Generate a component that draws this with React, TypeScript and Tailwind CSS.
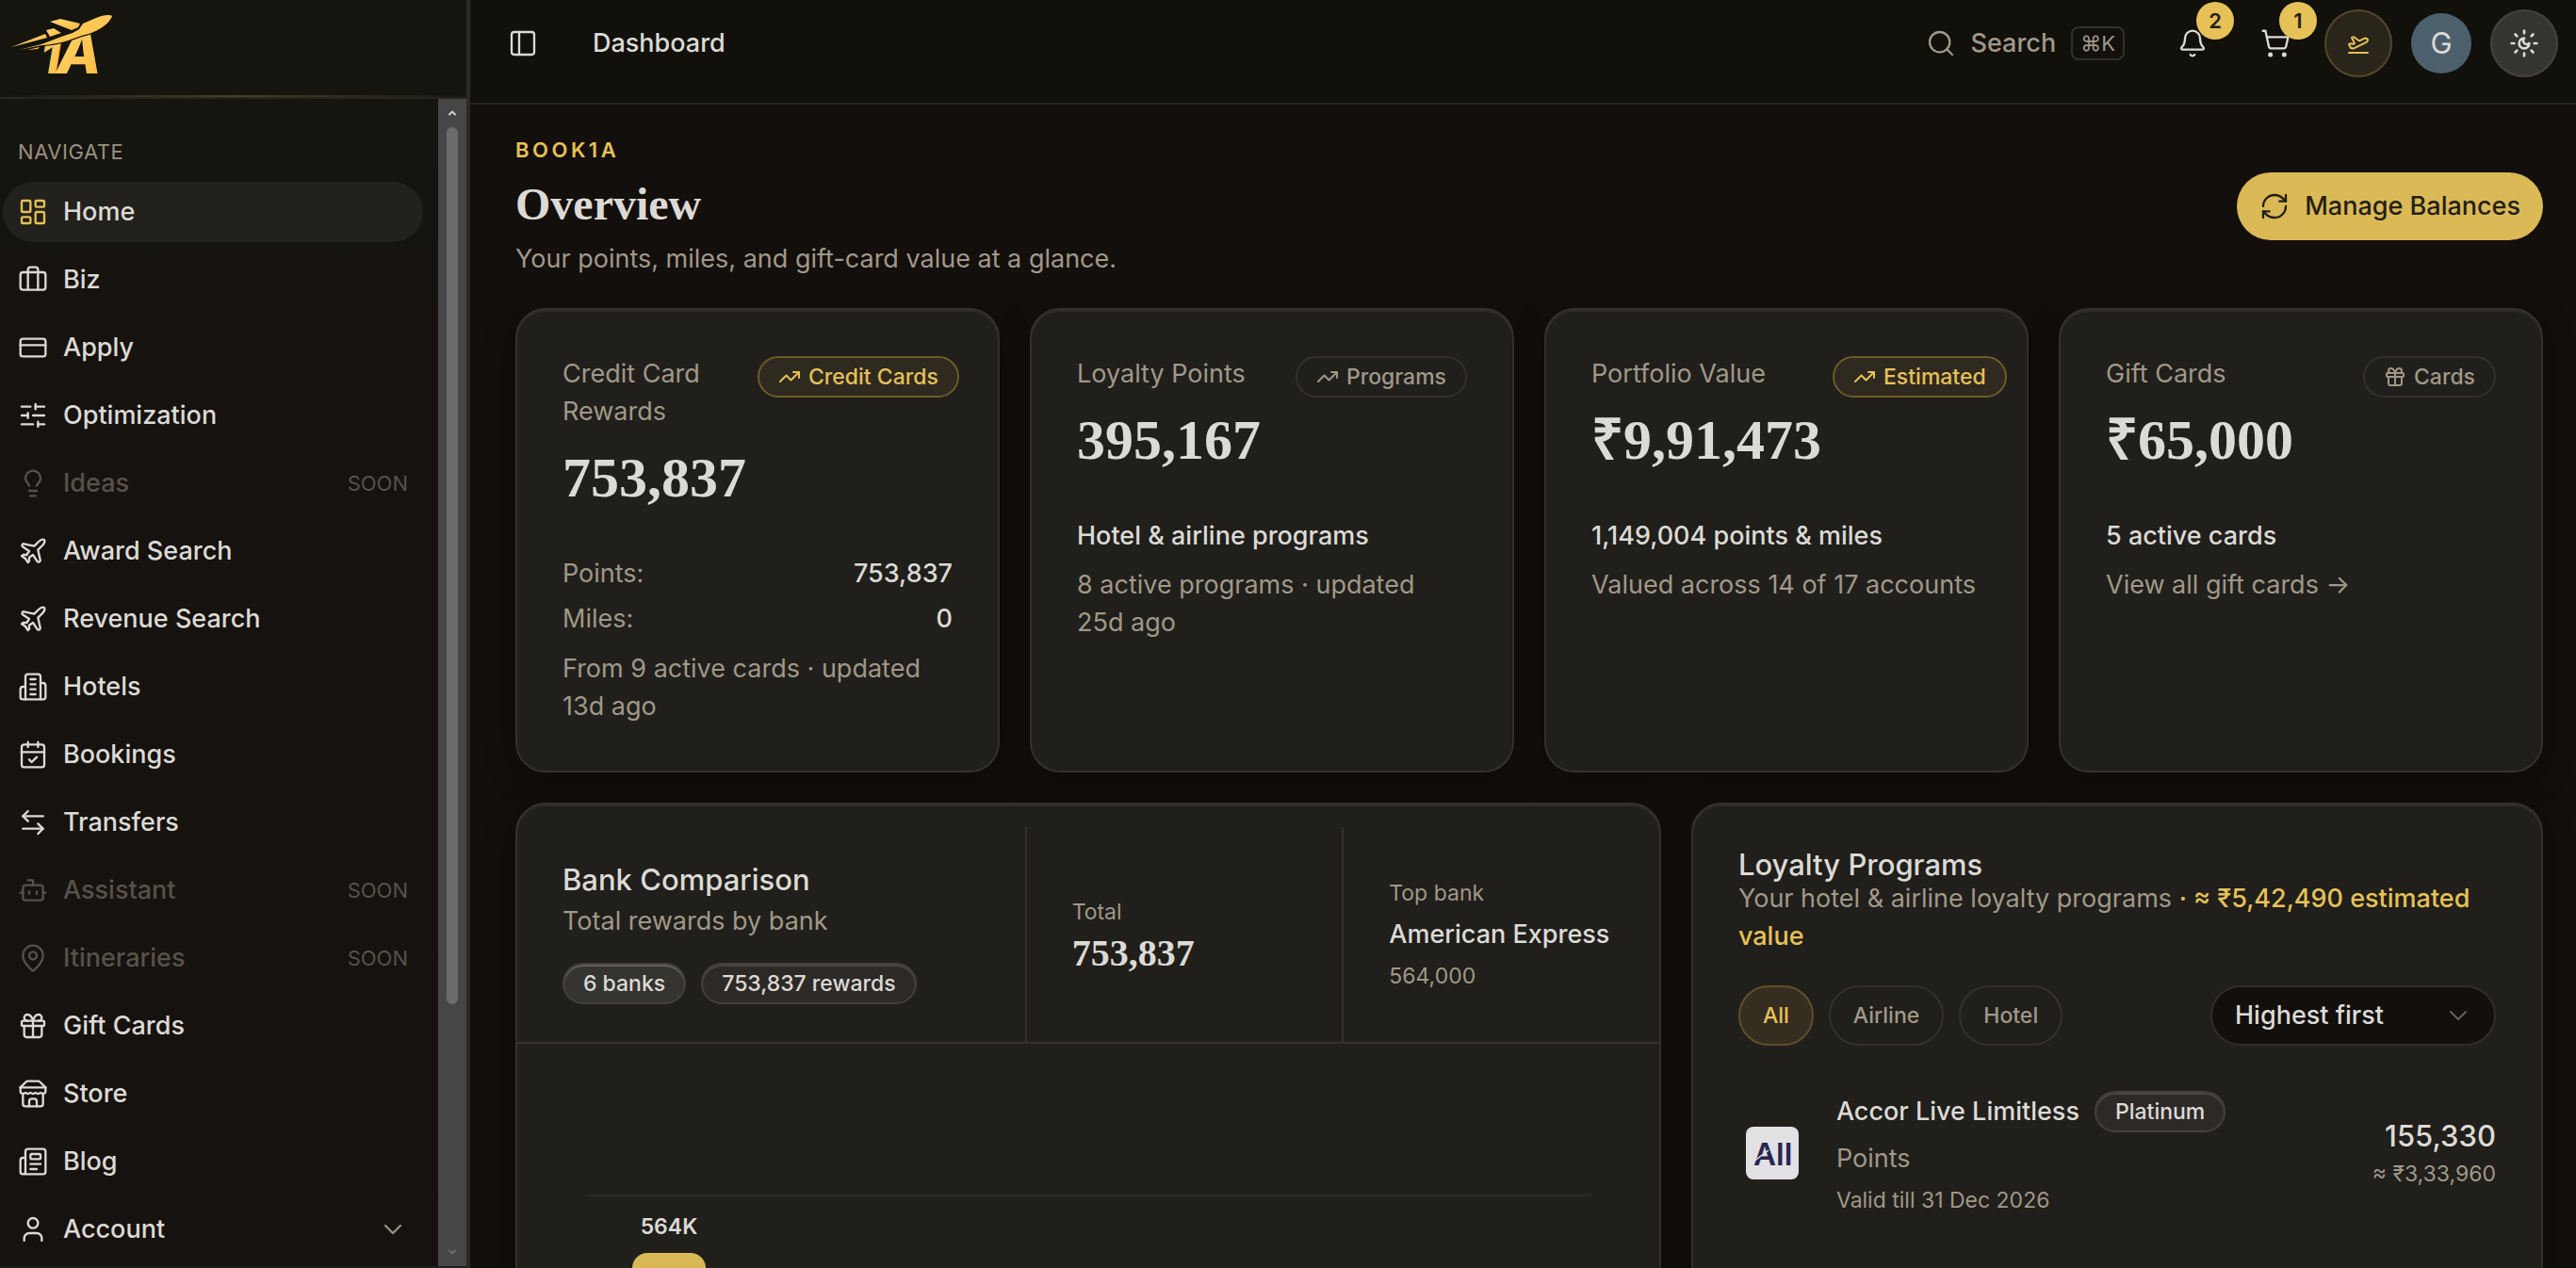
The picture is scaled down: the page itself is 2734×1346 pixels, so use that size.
import React from 'react';
import clsx from 'clsx';
import {
  ArrowLeftRight,
  Bell,
  Bot,
  Briefcase,
  CalendarCheck,
  ChevronDown,
  ChevronUp,
  CreditCard,
  Gift,
  LayoutDashboard,
  Lightbulb,
  MapPin,
  Newspaper,
  PanelLeft,
  Plane,
  PlaneTakeoff,
  RefreshCw,
  Search,
  ShoppingCart,
  SlidersHorizontal,
  TrendingUp,
  User,
} from 'lucide-react';

type IconType = React.ComponentType<{ className?: string; strokeWidth?: number }>;

const HotelIcon: IconType = ({ className, strokeWidth = 2 }) => (
  <svg viewBox="0 0 24 24" fill="none" stroke="currentColor" strokeWidth={strokeWidth} strokeLinecap="round" strokeLinejoin="round" className={className}>
    <path d="M6 22V4a2 2 0 0 1 2-2h8a2 2 0 0 1 2 2v18Z" />
    <path d="M6 12H4a2 2 0 0 0-2 2v6a2 2 0 0 0 2 2h2" />
    <path d="M18 9h2a2 2 0 0 1 2 2v9a2 2 0 0 1-2 2h-2" />
    <path d="M10 6h4M10 10h4M10 14h4M10 18h4" />
  </svg>
);

const StoreIcon: IconType = ({ className, strokeWidth = 2 }) => (
  <svg viewBox="0 0 24 24" fill="none" stroke="currentColor" strokeWidth={strokeWidth} strokeLinecap="round" strokeLinejoin="round" className={className}>
    <path d="m2 7 4.41-4.41A2 2 0 0 1 7.83 2h8.34a2 2 0 0 1 1.42.59L22 7" />
    <path d="M4 12v8a2 2 0 0 0 2 2h12a2 2 0 0 0 2-2v-8" />
    <path d="M15 22v-4a2 2 0 0 0-2-2h-2a2 2 0 0 0-2 2v4" />
    <path d="M2 7h20" />
    <path d="M22 7v3a2 2 0 0 1-2 2a2.7 2.7 0 0 1-1.59-.63.7.7 0 0 0-.82 0A2.7 2.7 0 0 1 16 12a2.7 2.7 0 0 1-1.59-.63.7.7 0 0 0-.82 0A2.7 2.7 0 0 1 12 12a2.7 2.7 0 0 1-1.59-.63.7.7 0 0 0-.82 0A2.7 2.7 0 0 1 8 12a2.7 2.7 0 0 1-1.59-.63.7.7 0 0 0-.82 0A2.7 2.7 0 0 1 4 12a2 2 0 0 1-2-2V7" />
  </svg>
);

// Sun rays around a small moon
const ThemeIcon: IconType = ({ className, strokeWidth = 2 }) => (
  <svg viewBox="0 0 24 24" fill="none" stroke="currentColor" strokeWidth={strokeWidth} strokeLinecap="round" strokeLinejoin="round" className={className}>
    <path d="M12 8a2.83 2.83 0 0 0 4 4 4 4 0 1 1-4-4" />
    <path d="M12 2v2M12 20v2M2 12h2M20 12h2" />
    <path d="m4.9 4.9 1.4 1.4M17.7 17.7l1.4 1.4M6.3 17.7l-1.4 1.4M19.1 4.9l-1.4 1.4" />
  </svg>
);

interface NavItem {
  label: string;
  icon: IconType;
  active?: boolean;
  soon?: boolean;
  expandable?: boolean;
}

const navItems: NavItem[] = [
  { label: 'Home', icon: LayoutDashboard, active: true },
  { label: 'Biz', icon: Briefcase },
  { label: 'Apply', icon: CreditCard },
  { label: 'Optimization', icon: SlidersHorizontal },
  { label: 'Ideas', icon: Lightbulb, soon: true },
  { label: 'Award Search', icon: Plane },
  { label: 'Revenue Search', icon: Plane },
  { label: 'Hotels', icon: HotelIcon },
  { label: 'Bookings', icon: CalendarCheck },
  { label: 'Transfers', icon: ArrowLeftRight },
  { label: 'Assistant', icon: Bot, soon: true },
  { label: 'Itineraries', icon: MapPin, soon: true },
  { label: 'Gift Cards', icon: Gift },
  { label: 'Store', icon: StoreIcon },
  { label: 'Blog', icon: Newspaper },
  { label: 'Account', icon: User, expandable: true },
];

const Logo = () => (
  <svg viewBox="0 0 112 84" className="h-[84px] w-[112px]" role="img" aria-label="1A">
    <defs>
      <linearGradient id="gold" x1="0" y1="0" x2="1" y2="1">
        <stop offset="0" stopColor="#ffd770" />
        <stop offset="1" stopColor="#ffb93f" />
      </linearGradient>
    </defs>
    <g fill="url(#gold)" fontFamily="Inter, sans-serif" fontWeight="800" fontStyle="italic">
      <text x="31" y="64" fontSize="48">1</text>
      <text x="48" y="64" fontSize="62">A</text>
    </g>
    {/* plane with speed trails, outlined in the sidebar colour to cut through the letters */}
    <g fill="url(#gold)" stroke="#15140f" strokeWidth="2.5" paintOrder="stroke" strokeLinejoin="round">
      <path d="M107 3C104 1 97 2 90 5L76 11L72 17L65 21C55 24 40 30 32 33L8 39L33 34C50 33 64 28 74 24C90 21 104 12 107 3Z" />
      <path d="M41 9L52 6L73 11L71 15L64 18Z" />
      <path d="M37 18L45 16L53 21L41 25Z" />
      <path d="M0 36L36 22L38 26Z" />
      <path d="M17 39L30 36L28 38Z" />
    </g>
  </svg>
);

const Sidebar = () => (
  <aside className="flex w-[499px] shrink-0 flex-col border-r-4 border-[#2b2926] bg-[#16120f]">
    <div className="shrink-0 border-b-2 border-[#262520] bg-[#15140f]">
      <div className="flex h-[101px] items-start pl-3 pt-3.5">
        <a href="#home">
          <Logo />
        </a>
      </div>
      <div className="h-0.5 bg-linear-to-r from-transparent via-[#4c3f20] to-transparent" />
    </div>
    <div className="flex min-h-0 flex-1 border-b-2 border-[#211d1a]">
      <nav className="flex min-w-0 flex-1 flex-col gap-2 overflow-hidden bg-linear-to-b from-[#15140f] to-[#16120f] to-30% pl-[3px] pr-4 pt-10">
        <h2 className="px-4 pb-2 text-[22px] leading-[32px] tracking-wide text-[#99917f]">NAVIGATE</h2>
        {navItems.map((item) => (
          <a
            key={item.label}
            href="#nav"
            aria-disabled={item.soon}
            className={clsx(
              'flex h-16 shrink-0 items-center gap-4 rounded-full px-4 text-[27px] font-medium',
              item.soon ? 'text-[#575148]' : 'text-[#dcdad5]',
              item.active && 'bg-[#22211c]'
            )}
          >
            <item.icon className={clsx('size-8 shrink-0', item.active && 'text-[#e6c158]')} strokeWidth={1.75} />
            <span className="flex-1">{item.label}</span>
            {item.soon && <span className="text-[22px] font-normal">SOON</span>}
            {item.expandable && <ChevronDown className="size-8 text-[#99917f]" strokeWidth={1.75} />}
          </a>
        ))}
      </nav>
      <div className="flex w-[30px] flex-col items-center bg-[#464646]">
        <ChevronUp className="h-[30px] w-3 text-[#d0d0d0]" strokeWidth={4} />
        <div className="w-3 flex-[931] rounded-full bg-[#6b6b6b]" />
        <div className="flex-[248]" />
        <ChevronDown className="h-[30px] w-3 text-[#6e6e6e]" strokeWidth={4} />
      </div>
    </div>
  </aside>
);

const CountBadge: React.FC<{ count: number }> = ({ count }) => (
  <span className="absolute -right-3 -top-3 flex size-10 items-center justify-center rounded-full bg-[#e6c158] text-[22px] font-semibold text-[#241f15]">
    {count}
  </span>
);

const TopBar = () => (
  <header className="flex h-[111px] shrink-0 items-center border-b-2 border-[#24221e] bg-[#11100b] pb-[17px] pl-10 pr-[19px]">
    <button type="button" aria-label="Toggle sidebar" className="text-[#dcdad5]">
      <PanelLeft className="size-8" strokeWidth={1.75} />
    </button>
    <span className="ml-[58px] text-[27px] font-medium text-[#dcdad5]">Dashboard</span>
    <button type="button" className="ml-auto mr-10 flex items-center gap-4 text-[27px] font-medium text-[#a19888]">
      <Search className="size-8" strokeWidth={1.75} />
      Search
      <kbd className="flex h-9 items-center rounded-lg border-2 border-[#33302b] px-2 font-[Inter,'DejaVu_Sans',sans-serif] text-[22px] font-normal">⌘K</kbd>
    </button>
    <div className="flex items-center gap-5">
      <div className="flex items-center gap-6 text-[#dcdad5]">
        <button type="button" aria-label="Notifications" className="relative flex size-16 items-center justify-center">
          <Bell className="size-8" strokeWidth={1.75} />
          <CountBadge count={2} />
        </button>
        <button type="button" aria-label="Cart" className="relative flex size-16 items-center justify-center">
          <ShoppingCart className="size-8" strokeWidth={1.75} />
          <CountBadge count={1} />
        </button>
      </div>
      <button type="button" aria-label="Flights" className="flex size-18 items-center justify-center rounded-full border-2 border-[#55462a] bg-[#2a251b] text-[#e6c158]">
        <PlaneTakeoff className="size-6" />
      </button>
      <button type="button" className="flex size-16 items-center justify-center rounded-full bg-[#4b606c] text-[31px] text-[#dcdad5]">G</button>
      <button type="button" aria-label="Theme" className="flex size-18 items-center justify-center rounded-full border-2 border-[#45423e] bg-[#353530] text-[#dcdad5]">
        <ThemeIcon className="size-8" />
      </button>
    </div>
  </header>
);

const cardClass =
  'rounded-[32px] border-2 border-[#35312a] bg-[#201f1b] shadow-[inset_0_2px_0_#2f2c27,0_8px_32px_rgba(0,0,0,0.4)]';

interface StatCardProps {
  title: string;
  value: string;
  badge: string;
  badgeIcon?: IconType;
  highlight?: boolean;
  children: React.ReactNode;
}

const StatCard: React.FC<StatCardProps> = ({ title, value, badge, badgeIcon: BadgeIcon = TrendingUp, highlight, children }) => (
  <section className={clsx(cardClass, 'p-12')}>
    <div className="grid grid-cols-[1fr_auto] items-start gap-x-3">
      <div>
        <h3 className="text-[27px] leading-[40px] text-[#a19888]">{title}</h3>
        <p className="mt-3.5 whitespace-nowrap font-['Liberation_Serif',serif] text-[60px] font-bold leading-[72px]">{value}</p>
      </div>
      <span
        className={clsx(
          'mt-px flex h-11 items-center gap-2 whitespace-nowrap rounded-full border-2 px-5 text-[23px] font-medium',
          highlight ? 'border-[#6f5a28] bg-[#2f2a1f] text-[#e6c158]' : 'border-[#35312a] text-[#a19888]'
        )}
      >
        <BadgeIcon className="size-6" />
        {badge}
      </span>
    </div>
    <div className="mt-[46px] flex flex-col text-[27px] leading-[40px]">{children}</div>
  </section>
);

const Pill: React.FC<{ children: React.ReactNode; light?: boolean }> = ({ children, light }) => (
  <span
    className={clsx(
      'flex h-11 items-center rounded-full border-2 border-[#45403a] px-5 text-[23px] font-medium',
      light ? 'bg-[#353430] shadow-[inset_0_2px_0_#64625e]' : 'bg-[#2d2927] shadow-[inset_0_2px_0_#4b4744]'
    )}
  >
    {children}
  </span>
);

const bars = [{ label: '564K', height: 400 }];

const BankComparison = () => (
  <section className={clsx(cardClass, 'overflow-hidden')}>
    <div className="grid grid-cols-[1.6fr_1fr_1fr] border-b-2 border-[#35312a] pt-6">
      <div className="px-12 pb-10 pt-9">
        <h2 className="text-[31px] font-medium leading-[40px]">Bank Comparison</h2>
        <p className="mt-1 text-[27px] leading-[40px] text-[#a19888]">Total rewards by bank</p>
        <div className="mt-6 flex gap-4">
          <Pill light>6 banks</Pill>
          <Pill>753,837 rewards</Pill>
        </div>
      </div>
      <div className="flex flex-col justify-center gap-2 border-l-2 border-[#35312a] px-12">
        <span className="text-[23px] leading-[32px] text-[#a19888]">Total</span>
        <span className="font-['Liberation_Serif',serif] text-[40px] font-bold leading-[40px]">753,837</span>
      </div>
      <div className="flex flex-col justify-center gap-2 whitespace-nowrap border-l-2 border-[#35312a] pl-12">
        <span className="text-[23px] leading-[32px] text-[#a19888]">Top bank</span>
        <span className="text-[27px] font-medium leading-[40px]">American Express</span>
        <span className="text-[23px] leading-[32px] text-[#a19888]">564,000</span>
      </div>
    </div>
    <div className="px-18 pt-40">
      <div className="grid grid-cols-6 border-t-2 border-[#2a2925] pt-4">
        {bars.map((bar) => (
          <div key={bar.label} className="flex flex-col items-center gap-3">
            <span className="text-[23px] font-semibold leading-[32px]">{bar.label}</span>
            <div className="w-[78px] rounded-t-2xl bg-linear-to-b from-[#dab956] to-[#a98a35]" style={{ height: bar.height }} />
          </div>
        ))}
      </div>
    </div>
  </section>
);

const filters = ['All', 'Airline', 'Hotel'];

const LoyaltyPrograms = () => {
  const [filter, setFilter] = React.useState('All');

  return (
    <section className={clsx(cardClass, 'p-12')}>
      <h2 className="text-[31px] font-medium leading-[32px]">Loyalty Programs</h2>
      <p className="text-[27px] leading-[40px] text-[#a19888]">
        Your hotel &amp; airline loyalty programs <span className="font-medium text-[#e6c158]">· ≈ ₹5,42,490 estimated value</span>
      </p>
      <div className="mt-8 flex items-center gap-4">
        {filters.map((name) => (
          <button
            key={name}
            type="button"
            onClick={() => setFilter(name)}
            className={clsx(
              'h-16 rounded-full border-2 px-6 text-[23px] font-medium',
              filter === name ? 'border-[#5f4f28] bg-[#352e20] text-[#e6c158]' : 'border-[#35312a] text-[#a19888]'
            )}
          >
            {name}
          </button>
        ))}
        <div className="relative ml-auto">
          <select aria-label="Sort programs" className="h-16 w-[303px] appearance-none rounded-full border-2 border-[#312d28] bg-[#130f0c] px-6 text-[27px] font-medium">
            <option>Highest first</option>
          </select>
          <ChevronDown className="pointer-events-none absolute right-6 top-4 size-8 text-[#66625a]" strokeWidth={1.5} />
        </div>
      </div>
      <div className="mt-12 flex items-center">
        <div className="flex w-18 justify-center">
          <svg viewBox="0 0 56 56" className="size-14" role="img" aria-label="All">
            <rect width="56" height="56" rx="8" fill="#e1e1e3" />
            <text x="8" y="41" fontFamily="Inter, sans-serif" fontSize="33" fontWeight="600" fill="#28264f">All</text>
            <path d="M8 37L24 25" stroke="#e1e1e3" strokeWidth="1.5" />
          </svg>
        </div>
        <div className="ml-8 flex flex-col gap-2">
          <div className="flex items-center gap-4">
            <span className="text-[27px] font-medium">Accor Live Limitless</span>
            <Pill>Platinum</Pill>
          </div>
          <span className="text-[27px] leading-[40px] text-[#a19888]">Points</span>
          <span className="text-[23px] leading-[32px] text-[#a19888]">Valid till 31 Dec 2026</span>
        </div>
        <div className="ml-auto flex flex-col gap-1 text-right">
          <span className="text-[31px] font-medium leading-[40px]">155,330</span>
          <span className="text-[23px] leading-[32px] text-[#a19888]">≈ ₹3,33,960</span>
        </div>
      </div>
    </section>
  );
};

export default function App() {
  return (
    <div className="flex h-screen overflow-hidden bg-[#130f0c] font-[Inter,sans-serif] text-[#dcdad5]">
      <Sidebar />
      <div className="flex min-w-0 flex-1 flex-col">
        <TopBar />
        <main className="min-h-0 flex-1 overflow-hidden pl-12 pr-[35px] pt-8">
          <div className="mb-8 flex items-center justify-between">
            <div>
              <p className="text-[22px] font-semibold leading-[32px] tracking-[0.16em] text-[#e6c158]">BOOK1A</p>
              <h1 className="mt-3.5 font-['Liberation_Serif',serif] text-[48px] font-bold leading-[56px]">Overview</h1>
              <p className="mt-2.5 text-[27px] leading-[40px] text-[#a19888]">Your points, miles, and gift-card value at a glance.</p>
            </div>
            <button type="button" className="flex h-18 items-center gap-4 rounded-full bg-[#dab956] px-6 text-[27px] font-medium text-[#241f15]">
              <RefreshCw className="size-8" strokeWidth={1.75} />
              Manage Balances
            </button>
          </div>

          <div className="grid grid-cols-4 gap-8">
            <StatCard title="Credit Card Rewards" value="753,837" badge="Credit Cards" highlight>
              <div className="flex justify-between text-[#a19888]">
                Points: <span className="font-medium text-[#dcdad5]">753,837</span>
              </div>
              <div className="mt-2 flex justify-between text-[#a19888]">
                Miles: <span className="font-medium text-[#dcdad5]">0</span>
              </div>
              <p className="mt-[13px] text-[#a19888]">From 9 active cards · updated 13d ago</p>
            </StatCard>
            <StatCard title="Loyalty Points" value="395,167" badge="Programs">
              <p className="font-medium">Hotel &amp; airline programs</p>
              <p className="mt-3 text-[#a19888]">8 active programs · updated 25d ago</p>
            </StatCard>
            <StatCard title="Portfolio Value" value="₹9,91,473" badge="Estimated" highlight>
              <p className="font-medium">1,149,004 points &amp; miles</p>
              <p className="mt-3 text-[#a19888]">Valued across 14 of 17 accounts</p>
            </StatCard>
            <StatCard title="Gift Cards" value="₹65,000" badge="Cards" badgeIcon={Gift}>
              <p className="font-medium">5 active cards</p>
              <a href="#gift-cards" className="mt-3 text-[#a19888]">View all gift cards →</a>
            </StatCard>
          </div>

          <div className="mt-8 grid grid-cols-[1.345fr_1fr] gap-8">
            <BankComparison />
            <LoyaltyPrograms />
          </div>
        </main>
      </div>
    </div>
  );
}
